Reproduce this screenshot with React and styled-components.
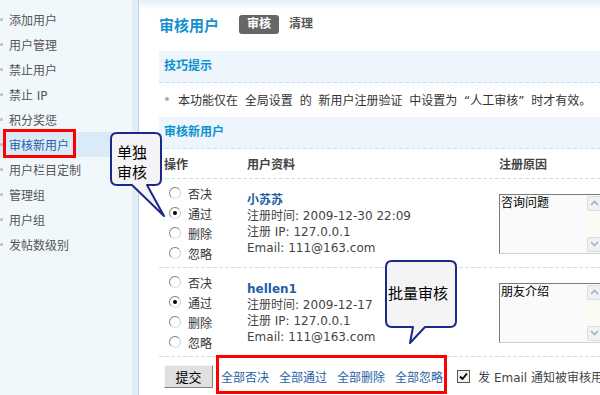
import React from 'react';
import styled, { createGlobalStyle } from 'styled-components';

const Global = createGlobalStyle`
  html, body { margin: 0; padding: 0; background: #fff; }
  body {
    font-family: "DejaVu Sans", "Noto Sans CJK SC", sans-serif;
    font-size: 12px;
    color: #333;
  }
  * { box-sizing: border-box; }
`;

const dash = (bg) => `repeating-linear-gradient(90deg, #c9e0f2 0 4px, transparent 4px 6px) left bottom / 100% 1px no-repeat${bg ? `, ${bg}` : ''}`;

const Page = styled.div`
  position: relative;
  width: 600px;
  height: 395px;
  overflow: hidden;
  display: flex;
`;

const Sidebar = styled.nav`
  width: 139px;
  flex: none;
  background: #f1f8fc;
  border-right: 1px solid #b7d3e5;
  box-shadow: inset -6px 0 0 #e1eef8;
  padding: 7px 6px 0 0;
`;

const NavItem = styled.div`
  height: 25px;
  display: flex;
  align-items: center;
  color: ${(p) => (p.$active ? '#1f5fa6' : '#555')};
  background: ${(p) => (p.$active ? '#dbeaf7' : 'transparent')};
  &::before {
    content: '';
    width: 3px;
    height: 3px;
    border-radius: 50%;
    background: #bbb;
    margin-right: 6px;
  }
`;

const Main = styled.main`
  flex: 1;
  min-width: 0;
  overflow: hidden;
  padding-left: 20px;
  background: linear-gradient(to bottom, #e3eef7 0, #fff 9px);
`;

const Content = styled.div`
  width: 480px;
`;

const TitleRow = styled.div`
  height: 48px;
  margin-bottom: 3px;
  display: flex;
  align-items: center;
`;

const Title = styled.h1`
  margin: 0 20px 0 0;
  font-size: 15px;
  font-weight: bold;
  color: #1690cf;
`;

const Tab = styled.span`
  height: 19px;
  line-height: 19px;
  padding: 0 8px;
  border-radius: 3px;
  font-weight: bold;
  background: ${(p) => (p.$active ? '#666' : 'transparent')};
  color: ${(p) => (p.$active ? '#fff' : '#555')};
  margin-left: ${(p) => (p.$active ? '0' : '2px')};
`;

const SectionHeader = styled.div`
  height: 32px;
  line-height: 31px;
  padding-left: 5px;
  font-weight: bold;
  color: #0c93cf;
  background: ${dash('#eef5fc')};
`;

const TipRow = styled.div`
  height: 34px;
  display: flex;
  align-items: center;
  padding: 0 0 2px 6px;
  color: #333;
  word-spacing: 3px;
  white-space: nowrap;
  &::before {
    content: '';
    width: 4px;
    height: 4px;
    border-radius: 50%;
    background: #aaa;
    margin-right: 9px;
  }
`;

const Grid = styled.div`
  display: grid;
  grid-template-columns: 83px 252px 1fr;
  padding-left: 5px;
  background: ${dash()};
`;

const ColHead = styled(Grid)`
  height: 30px;
  align-items: center;
  font-weight: bold;
  color: #444;
  padding-bottom: 1px;
`;

const Row = styled(Grid)`
  height: 89px;
  padding-bottom: 1px;
  align-items: center;
`;

const Ops = styled.div`
  padding-left: 5px;
`;

const Option = styled.label`
  height: 20px;
  display: flex;
  align-items: center;
  color: #333;
`;

const Radio = styled.span`
  width: 12px;
  height: 12px;
  border-radius: 50%;
  border: 1px solid;
  border-color: #7d7d7d #cfcfcf #e0e0e0 #8a8a8a;
  background: radial-gradient(circle, #fff 0 55%, #f0f0f0 100%);
  margin-right: 7px;
  display: flex;
  align-items: center;
  justify-content: center;
  &::after {
    content: '';
    width: 4px;
    height: 4px;
    border-radius: 50%;
    background: ${(p) => (p.$checked ? '#000' : 'transparent')};
  }
`;

const Info = styled.div`
  align-self: start;
  padding-top: 13px;
  line-height: 16px;
  color: #444;
`;

const Name = styled.div`
  font-weight: bold;
  color: #1f5fa6;
`;

const Reason = styled.div`
  width: 105px;
  height: 60px;
  display: flex;
  border: 1px solid;
  border-color: #7b7b7b #d5d5d5 #d0d0d0 #7b7b7b;
  background: #fafafa;
  margin-top: 1px;
`;

const ReasonText = styled.div`
  flex: 1;
  padding: 1px 1px;
  color: #000;
  line-height: 15px;
`;

const Scroll = styled.div`
  width: 17px;
  background: #fbfbf4;
  display: flex;
  flex-direction: column;
  justify-content: space-between;
  padding: 1px 0 1px 1px;
`;

const ScrollBtn = styled.div`
  width: 15px;
  height: 15px;
  border: 1px solid #d6dde6;
  border-radius: 2px;
  background: #eef2f6;
  display: flex;
  align-items: center;
  justify-content: center;
`;

const BottomBar = styled.div`
  height: 38px;
  display: flex;
  align-items: center;
  padding-left: 5px;
`;

const Button = styled.button`
  width: 49px;
  height: 23px;
  padding: 0;
  margin: 1px 8px 0 0;
  background: #e0e0e0;
  border: 1px solid;
  border-color: #f4f4f4 #808080 #808080 #f4f4f4;
  font-family: "Noto Sans CJK SC", sans-serif;
  font-size: 13px;
  color: #000;
`;

const Links = styled.div`
  display: flex;
  gap: 10px;
  margin-right: 14px;
`;

const Link = styled.a`
  color: #1f5fa6;
  text-decoration: none;
`;

const Check = styled.span`
  width: 13px;
  height: 13px;
  border: 1px solid #555;
  background: #f3f3ec;
  display: flex;
  align-items: center;
  justify-content: center;
  margin: 1px 8px 0 0;
`;

const Notice = styled.span`
  color: #444;
  white-space: nowrap;
`;

const Callout = styled.div`
  position: absolute;
  left: ${(p) => p.$x}px;
  top: ${(p) => p.$y}px;
  width: ${(p) => p.$w}px;
  height: ${(p) => p.$h}px;
  svg { position: absolute; inset: 0; }
`;

const CalloutText = styled.div`
  position: absolute;
  left: ${(p) => p.$x}px;
  top: ${(p) => p.$y}px;
  font-family: "Noto Sans CJK SC", sans-serif;
  font-size: 15px;
  line-height: 20px;
  color: #000;
  white-space: nowrap;
`;

const RedBox = styled.div`
  position: absolute;
  left: ${(p) => p.$x}px;
  top: ${(p) => p.$y}px;
  width: ${(p) => p.$w}px;
  height: ${(p) => p.$h}px;
  border: 3px solid #f00;
`;

const navItems = ['添加用户', '用户管理', '禁止用户', '禁止 IP', '积分奖惩', '审核新用户', '用户栏目定制', '管理组', '用户组', '发帖数级别'];
const opts = ['否决', '通过', '删除', '忽略'];

const users = [
  { name: '小苏苏', time: '2009-12-30 22:09', ip: '127.0.0.1', email: '111@163.com', reason: '咨询问题' },
  { name: 'hellen1', time: '2009-12-17', ip: '127.0.0.1', email: '111@163.com', reason: '朋友介绍' },
];

const Chevron = ({ up }) => (
  <svg width="9" height="6" viewBox="0 0 9 6">
    <path d={up ? 'M1 5 L4.5 1.5 L8 5' : 'M1 1 L4.5 4.5 L8 1'} fill="none" stroke="#a7b0c0" strokeWidth="1.6" />
  </svg>
);

export default function App() {
  return (
    <Page>
      <Global />
      <Sidebar>
        {navItems.map((t) => (
          <NavItem key={t} $active={t === '审核新用户'}>{t}</NavItem>
        ))}
      </Sidebar>
      <Main>
        <Content>
          <TitleRow>
            <Title>审核用户</Title>
            <Tab $active>审核</Tab>
            <Tab>清理</Tab>
          </TitleRow>
          <SectionHeader>技巧提示</SectionHeader>
          <TipRow>本功能仅在 全局设置 的 新用户注册验证 中设置为 “人工审核” 时才有效。</TipRow>
          <SectionHeader>审核新用户</SectionHeader>
          <ColHead>
            <div>操作</div>
            <div>用户资料</div>
            <div>注册原因</div>
          </ColHead>
          {users.map((u) => (
            <Row key={u.name}>
              <Ops>
                {opts.map((o) => (
                  <Option key={o}>
                    <Radio $checked={o === '通过'} />
                    {o}
                  </Option>
                ))}
              </Ops>
              <Info>
                <Name>{u.name}</Name>
                <div>注册时间: {u.time}</div>
                <div>注册 IP: {u.ip}</div>
                <div>Email: {u.email}</div>
              </Info>
              <Reason>
                <ReasonText>{u.reason}</ReasonText>
                <Scroll>
                  <ScrollBtn><Chevron up /></ScrollBtn>
                  <ScrollBtn><Chevron /></ScrollBtn>
                </Scroll>
              </Reason>
            </Row>
          ))}
          <BottomBar>
            <Button>提交</Button>
            <Links>
              <Link href="#">全部否决</Link>
              <Link href="#">全部通过</Link>
              <Link href="#">全部删除</Link>
              <Link href="#">全部忽略</Link>
            </Links>
            <Check>
              <svg width="9" height="9" viewBox="0 0 9 9">
                <path d="M1 4.5 L3.5 7 L8 1.5" fill="none" stroke="#000" strokeWidth="1.8" />
              </svg>
            </Check>
            <Notice>发 Email 通知被审核用户</Notice>
          </BottomBar>
        </Content>
      </Main>

      <RedBox $x={3} $y={129} $w={73} $h={29} />
      <RedBox $x={216} $y={355} $w={231} $h={39} />

      <Callout $x={108} $y={130} $w={62} $h={90}>
        <svg width="62" height="90" viewBox="0 0 62 90">
          <path d="M9 3 H47 Q53 3 53 9 V49 Q53 55 47 55 H39 L56 86 L24 55 H9 Q3 55 3 49 V9 Q3 3 9 3 Z" fill="#f4f4f7" stroke="#1b2a8a" strokeWidth="2" strokeLinejoin="round" />
        </svg>
        <CalloutText $x={9} $y={12}>单独<br />审核</CalloutText>
      </Callout>

      <Callout $x={383} $y={258} $w={78} $h={90}>
        <svg width="78" height="90" viewBox="0 0 78 90">
          <path d="M9 3 H67 Q73 3 73 9 V63 Q73 69 67 69 H42 L27 85 L30 69 H9 Q3 69 3 63 V9 Q3 3 9 3 Z" fill="#f4f4f7" stroke="#1b2a8a" strokeWidth="2" strokeLinejoin="round" />
        </svg>
        <CalloutText $x={5} $y={25}>批量审核</CalloutText>
      </Callout>
    </Page>
  );
}
